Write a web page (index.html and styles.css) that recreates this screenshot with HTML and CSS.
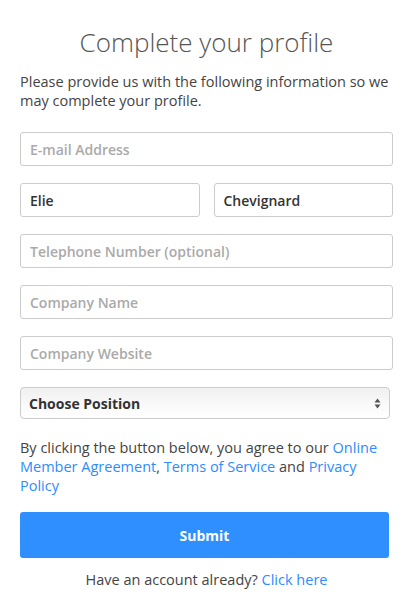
FILE: index.html
```html
<!DOCTYPE html>
<html>
<head>
<meta charset="utf-8">
<link rel="stylesheet" href="styles.css">
</head>
<body>
<div class="page">
  <h1 class="title">Complete your profile</h1>
  <p class="intro">Please provide us with the following information so we may complete your profile.</p>
  <form class="form">
    <input class="field" type="text" placeholder="E-mail Address">
    <div class="row">
      <input class="field" type="text" value="Elie">
      <input class="field" type="text" value="Chevignard">
    </div>
    <input class="field" type="text" placeholder="Telephone Number (optional)">
    <input class="field" type="text" placeholder="Company Name">
    <input class="field" type="text" placeholder="Company Website">
    <div class="select">
      <span>Choose Position</span>
      <svg class="arrows" width="7" height="11" viewBox="0 0 7 11"><path d="M3.5 0.5 L6.5 4.5 H0.5 Z" fill="#555"/><path d="M3.5 10.5 L6.5 6.5 H0.5 Z" fill="#555"/></svg>
    </div>
    <p class="terms">By clicking the button below, you agree to our <a href="#">Online Member Agreement</a>, <a href="#">Terms of Service</a> and <a href="#">Privacy Policy</a></p>
    <button class="submit" type="button">Submit</button>
    <p class="login">Have an account already? <a href="#">Click here</a></p>
  </form>
</div>
</body>
</html>
```
FILE: styles.css
```css
* { box-sizing: border-box; }
body {
  margin: 0;
  background: #fff;
  font-family: "Open Sans", "Liberation Sans", sans-serif;
  color: #444;
}
.page {
  padding: 24px 17px 0 20px;
}
.title {
  margin: 0;
  font-size: 26px;
  font-weight: 300;
  line-height: 36px;
  text-align: center;
  color: #555;
}
.intro {
  margin: 12px 0 0;
  font-size: 14.5px;
  line-height: 19px;
  color: #444;
}
.form {
  margin-top: 22px;
  display: flex;
  flex-direction: column;
  gap: 17px;
}
.field {
  display: block;
  width: 100%;
  height: 34px;
  border: 1px solid #ccc;
  border-radius: 3px;
  padding: 0 9px;
  font-family: inherit;
  font-size: 14px;
  font-weight: 600;
  color: #333;
  background: #fff;
  outline: none;
}
.field::placeholder {
  color: #aaa;
  font-weight: 600;
}
.row {
  display: flex;
  gap: 14px;
}
.row .field { flex: 1; min-width: 0; }
.select {
  width: 370px;
  height: 32px;
  border: 1px solid #ccc;
  border-radius: 4px;
  background: linear-gradient(#f0f0f0, #fafafa 60%, #fff);
  display: flex;
  align-items: center;
  justify-content: space-between;
  padding: 0 8px 0 8px;
  font-size: 14px;
  font-weight: 700;
  color: #333;
}
.arrows { display: block; }
.terms {
  margin: 2px 0 0;
  padding-right: 8px;
  font-size: 14.5px;
  line-height: 19px;
  color: #444;
}
.terms a, .login a {
  color: #2d8cff;
  text-decoration: none;
}
.submit {
  margin-top: 0;
  width: 369px;
  height: 46px;
  border: none;
  border-radius: 3px;
  background: #2f8fff;
  color: #fff;
  font-family: inherit;
  font-size: 14px;
  font-weight: 700;
}
.login {
  margin: -5px 0 0;
  text-align: center;
  font-size: 14.5px;
  line-height: 20px;
  color: #444;
}
```
